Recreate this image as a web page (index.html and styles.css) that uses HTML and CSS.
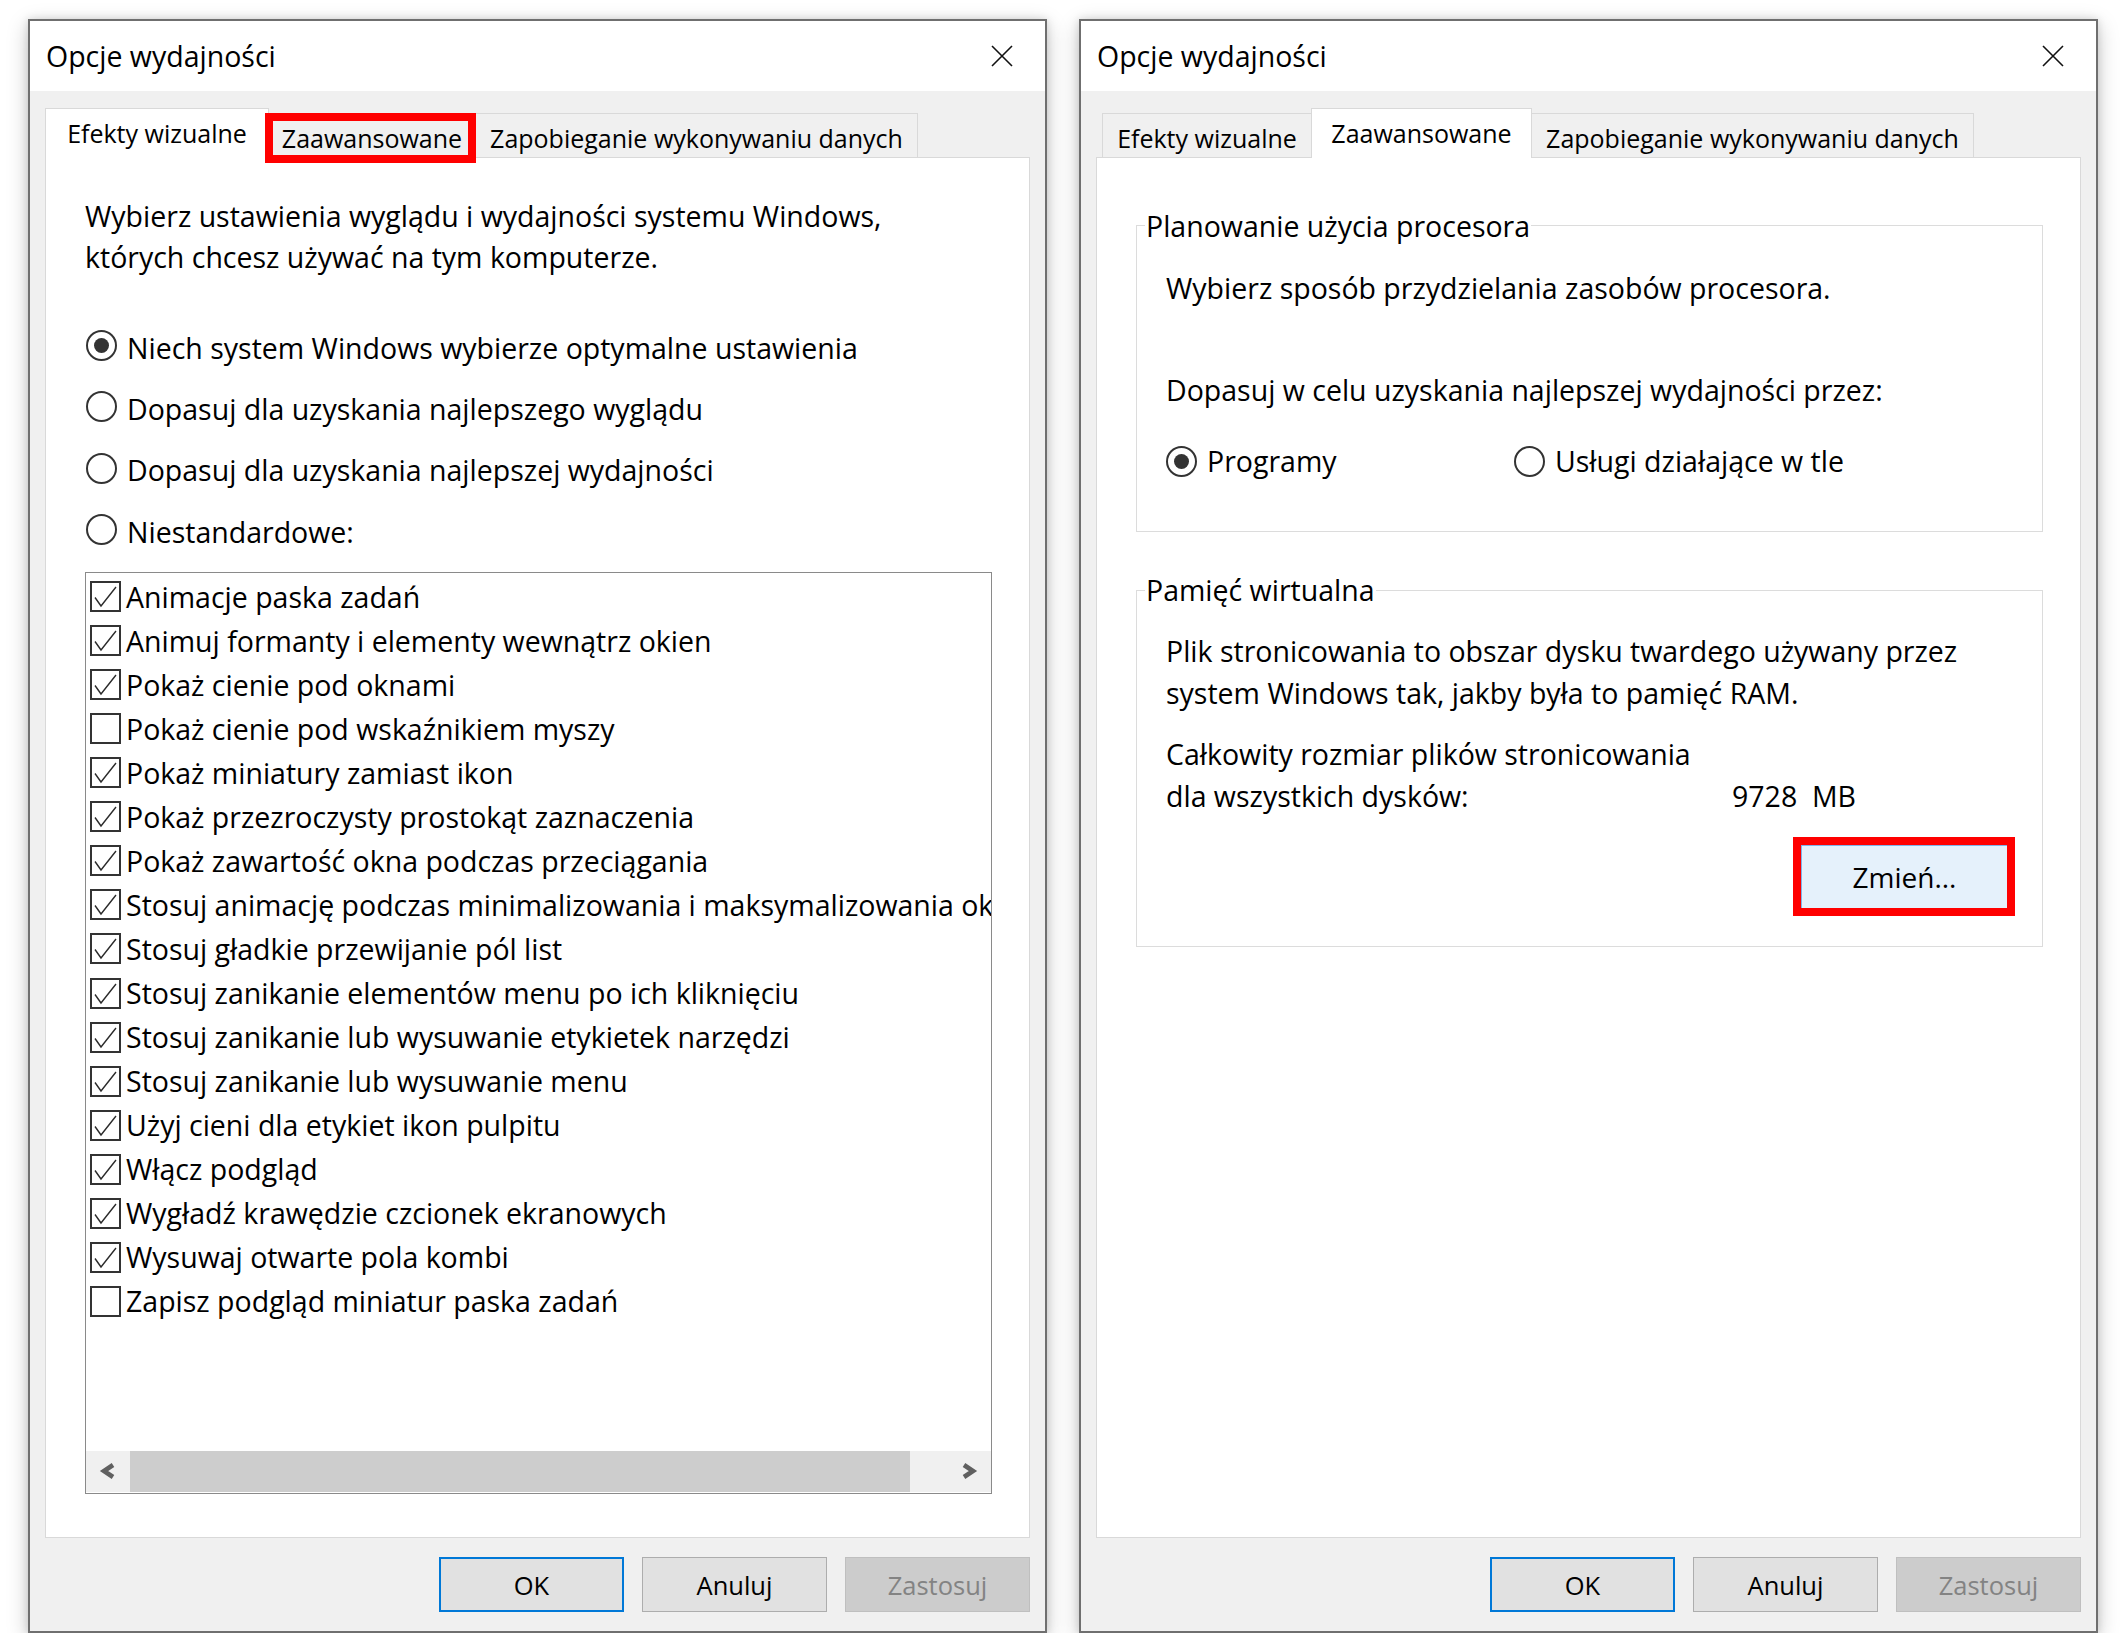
FILE: index.html
```html
<!DOCTYPE html>
<html lang="pl">
<head>
<meta charset="utf-8">
<title>Opcje wydajności</title>
<link rel="stylesheet" href="styles.css">
</head>
<body>
<div class="screen">

  <section class="dialog">
    <header class="titlebar">
      <span class="title">Opcje wydajności</span>
      <svg class="close" width="22" height="22" viewBox="0 0 22 22"><path d="M1 1L21 21M21 1L1 21" stroke="#111" stroke-width="1.6" fill="none"/></svg>
    </header>
    <div class="dialog-body">
      <div class="tabs">
        <div class="tab tab-efekty tab-active">Efekty wizualne</div>
        <div class="tab tab-zaaw">Zaawansowane<span class="mark mark-tab"></span></div>
        <div class="tab tab-dep">Zapobieganie wykonywaniu danych</div>
      </div>
      <div class="panel panel-visual">
        <p class="desc">Wybierz ustawienia wyglądu i wydajności systemu Windows,<br>których chcesz używać na tym komputerze.</p>
        <div class="radios">
          <div class="radio-row"><span class="radio checked"></span><span>Niech system Windows wybierze optymalne ustawienia</span></div>
          <div class="radio-row"><span class="radio"></span><span>Dopasuj dla uzyskania najlepszego wyglądu</span></div>
          <div class="radio-row"><span class="radio"></span><span>Dopasuj dla uzyskania najlepszej wydajności</span></div>
          <div class="radio-row"><span class="radio"></span><span>Niestandardowe:</span></div>
        </div>
        <div class="listbox">
          <div class="items">
            <div class="item"><span class="check on"><svg viewBox="0 0 27 27"><path d="M3 14.5L9 23L24 4"/></svg></span><span>Animacje paska zadań</span></div>
            <div class="item"><span class="check on"><svg viewBox="0 0 27 27"><path d="M3 14.5L9 23L24 4"/></svg></span><span>Animuj formanty i elementy wewnątrz okien</span></div>
            <div class="item"><span class="check on"><svg viewBox="0 0 27 27"><path d="M3 14.5L9 23L24 4"/></svg></span><span>Pokaż cienie pod oknami</span></div>
            <div class="item"><span class="check"></span><span>Pokaż cienie pod wskaźnikiem myszy</span></div>
            <div class="item"><span class="check on"><svg viewBox="0 0 27 27"><path d="M3 14.5L9 23L24 4"/></svg></span><span>Pokaż miniatury zamiast ikon</span></div>
            <div class="item"><span class="check on"><svg viewBox="0 0 27 27"><path d="M3 14.5L9 23L24 4"/></svg></span><span>Pokaż przezroczysty prostokąt zaznaczenia</span></div>
            <div class="item"><span class="check on"><svg viewBox="0 0 27 27"><path d="M3 14.5L9 23L24 4"/></svg></span><span>Pokaż zawartość okna podczas przeciągania</span></div>
            <div class="item"><span class="check on"><svg viewBox="0 0 27 27"><path d="M3 14.5L9 23L24 4"/></svg></span><span>Stosuj animację podczas minimalizowania i maksymalizowania okien</span></div>
            <div class="item"><span class="check on"><svg viewBox="0 0 27 27"><path d="M3 14.5L9 23L24 4"/></svg></span><span>Stosuj gładkie przewijanie pól list</span></div>
            <div class="item"><span class="check on"><svg viewBox="0 0 27 27"><path d="M3 14.5L9 23L24 4"/></svg></span><span>Stosuj zanikanie elementów menu po ich kliknięciu</span></div>
            <div class="item"><span class="check on"><svg viewBox="0 0 27 27"><path d="M3 14.5L9 23L24 4"/></svg></span><span>Stosuj zanikanie lub wysuwanie etykietek narzędzi</span></div>
            <div class="item"><span class="check on"><svg viewBox="0 0 27 27"><path d="M3 14.5L9 23L24 4"/></svg></span><span>Stosuj zanikanie lub wysuwanie menu</span></div>
            <div class="item"><span class="check on"><svg viewBox="0 0 27 27"><path d="M3 14.5L9 23L24 4"/></svg></span><span>Użyj cieni dla etykiet ikon pulpitu</span></div>
            <div class="item"><span class="check on"><svg viewBox="0 0 27 27"><path d="M3 14.5L9 23L24 4"/></svg></span><span>Włącz podgląd</span></div>
            <div class="item"><span class="check on"><svg viewBox="0 0 27 27"><path d="M3 14.5L9 23L24 4"/></svg></span><span>Wygładź krawędzie czcionek ekranowych</span></div>
            <div class="item"><span class="check on"><svg viewBox="0 0 27 27"><path d="M3 14.5L9 23L24 4"/></svg></span><span>Wysuwaj otwarte pola kombi</span></div>
            <div class="item"><span class="check"></span><span>Zapisz podgląd miniatur paska zadań</span></div>
          </div>
          <div class="scrollbar">
            <span class="sb-btn"><svg width="20" height="18" viewBox="0 0 20 18"><path d="M15 3L6 9L15 15"/></svg></span>
            <span class="sb-track"><span class="sb-thumb"></span></span>
            <span class="sb-btn"><svg width="20" height="18" viewBox="0 0 20 18"><path d="M5 3L14 9L5 15"/></svg></span>
          </div>
        </div>
      </div>
      <div class="buttons">
        <span class="btn btn-default">OK</span>
        <span class="btn">Anuluj</span>
        <span class="btn btn-disabled">Zastosuj</span>
      </div>
    </div>
  </section>

  <section class="dialog">
    <header class="titlebar">
      <span class="title">Opcje wydajności</span>
      <svg class="close" width="22" height="22" viewBox="0 0 22 22"><path d="M1 1L21 21M21 1L1 21" stroke="#111" stroke-width="1.6" fill="none"/></svg>
    </header>
    <div class="dialog-body">
      <div class="tabs tabs-inset">
        <div class="tab tab-efekty">Efekty wizualne</div>
        <div class="tab tab-zaaw tab-active">Zaawansowane</div>
        <div class="tab tab-dep">Zapobieganie wykonywaniu danych</div>
      </div>
      <div class="panel panel-advanced">
        <fieldset class="group group-cpu">
          <legend>Planowanie użycia procesora</legend>
          <div class="group-body">
            <p class="line">Wybierz sposób przydzielania zasobów procesora.</p>
            <p class="line line-gap">Dopasuj w celu uzyskania najlepszej wydajności przez:</p>
            <div class="options">
              <div class="option option-first"><span class="radio checked"></span><span>Programy</span></div>
              <div class="option"><span class="radio"></span><span>Usługi działające w tle</span></div>
            </div>
          </div>
        </fieldset>
        <fieldset class="group group-mem">
          <legend>Pamięć wirtualna</legend>
          <div class="group-body group-body-mem">
            <p class="para">Plik stronicowania to obszar dysku twardego używany przez<br>system Windows tak, jakby była to pamięć RAM.</p>
            <div class="total">
              <span class="total-label">Całkowity rozmiar plików stronicowania</span>
              <span></span>
              <span class="total-label">dla wszystkich dysków:</span>
              <span class="total-value">9728  MB</span>
            </div>
            <div class="change-row">
              <span class="btn-change">Zmień...<span class="mark mark-btn"></span></span>
            </div>
          </div>
        </fieldset>
      </div>
      <div class="buttons">
        <span class="btn btn-default">OK</span>
        <span class="btn">Anuluj</span>
        <span class="btn btn-disabled">Zastosuj</span>
      </div>
    </div>
  </section>

</div>
</body>
</html>
```

FILE: styles.css
```css
html, body {
  margin: 0;
  padding: 0;
  background: #ffffff;
}

body {
  font-family: "Open Sans", "Noto Sans", "DejaVu Sans", sans-serif;
  color: #000;
  font-size: 28.5px;
}

p { margin: 0; }

.screen {
  display: flex;
  gap: 32px;
  padding: 19px 0 0 28px;
}

.dialog {
  width: 1019px;
  height: 1614px;
  box-sizing: border-box;
  border: 2px solid #6f6f6f;
  background: #f0f0f0;
  display: flex;
  flex-direction: column;
  box-shadow: 0 6px 20px rgba(0, 0, 0, 0.22), 0 0 8px rgba(0, 0, 0, 0.12);
}

.titlebar {
  height: 70px;
  flex: 0 0 70px;
  box-sizing: border-box;
  background: #ffffff;
  display: flex;
  align-items: center;
  justify-content: space-between;
  padding: 0 32px 1px 16px;
}

.title {
  font-size: 28.5px;
}

.close {
  display: block;
  margin-top: 1px;
}

.dialog-body {
  flex: 1;
  display: flex;
  flex-direction: column;
  padding: 17px 15px 19px 15px;
  min-height: 0;
}

/* ---------- tabs ---------- */
.tabs {
  display: flex;
  align-items: flex-end;
  height: 49px;
  flex: 0 0 49px;
  position: relative;
  z-index: 1;
}

.tabs-inset {
  padding-left: 6px;
}

.tab {
  position: relative;
  box-sizing: border-box;
  height: 44px;
  border: 1px solid #d9d9d9;
  border-bottom: none;
  background: #f0f0f0;
  font-size: 25px;
  line-height: 34px;
  padding-top: 7px;
  text-align: center;
  white-space: nowrap;
}

.tab + .tab {
  margin-left: -1px;
}

.tab-active {
  height: 50px;
  margin-bottom: -1px;
  background: #ffffff;
  z-index: 1;
}

.tab-efekty { width: 210px; }
.tab-efekty.tab-active { width: 224px; }
.tab-zaaw { width: 208px; }
.tab-zaaw.tab-active { width: 221px; }
.tab-dep { width: 443px; }

.mark {
  position: absolute;
  border: 8px solid #ff0000;
  pointer-events: none;
}

.mark-tab {
  left: -4px;
  top: -1px;
  right: -1px;
  bottom: -6px;
  z-index: 3;
}

/* ---------- panel ---------- */
.panel {
  flex: 1;
  min-height: 0;
  background: #ffffff;
  border: 1px solid #d9d9d9;
  position: relative;
  z-index: 0;
}

.panel-visual {
  padding: 38px 0 0 39px;
}

.desc {
  line-height: 41px;
}

.radios {
  margin-top: 39px;
}

.radio-row {
  display: flex;
  align-items: center;
  height: 61.3px;
  white-space: nowrap;
}

.radio {
  flex: 0 0 auto;
  width: 31px;
  height: 31px;
  box-sizing: border-box;
  border: 2px solid #333333;
  border-radius: 50%;
  background: #ffffff;
  display: flex;
  align-items: center;
  justify-content: center;
  margin: 0 10px 4px 1px;
}

.radio.checked::after {
  content: "";
  width: 15px;
  height: 15px;
  border-radius: 50%;
  background: #333333;
}

/* ---------- list box ---------- */
.listbox {
  margin-top: 9.4px;
  width: 907px;
  height: 922px;
  box-sizing: border-box;
  border: 1px solid #8a8a8a;
  display: flex;
  flex-direction: column;
  background: #ffffff;
}

.items {
  flex: 1;
  min-height: 0;
  overflow: hidden;
  padding-top: 2px;
}

.item {
  display: flex;
  align-items: center;
  height: 44.05px;
  padding-left: 4px;
  white-space: nowrap;
}

.check {
  flex: 0 0 auto;
  width: 31px;
  height: 31px;
  box-sizing: border-box;
  border: 2px solid #333333;
  margin-right: 5px;
  background: #ffffff;
}

.check svg {
  display: block;
  width: 27px;
  height: 27px;
}

.check path {
  fill: none;
  stroke: #2b2b2b;
  stroke-width: 1.4;
}

.scrollbar {
  flex: 0 0 41px;
  height: 41px;
  margin-bottom: 1px;
  display: flex;
  background: #f0f0f0;
}

.sb-btn {
  flex: 0 0 44px;
  display: flex;
  align-items: center;
  justify-content: center;
}

.sb-btn svg path {
  fill: none;
  stroke: #606060;
  stroke-width: 4.6;
  stroke-linejoin: miter;
}

.sb-track {
  flex: 1;
  display: flex;
}

.sb-thumb {
  width: 780px;
  background: #cdcdcd;
}

/* ---------- buttons ---------- */
.buttons {
  flex: 0 0 55px;
  display: flex;
  justify-content: flex-end;
  gap: 18px;
  margin-top: 19px;
}

.btn {
  width: 185px;
  height: 55px;
  box-sizing: border-box;
  border: 1px solid #adadad;
  background: #e1e1e1;
  display: flex;
  align-items: center;
  justify-content: center;
  font-size: 25.5px;
}

.btn-default {
  border: 2px solid #0078d7;
}

.btn-disabled {
  background: #cccccc;
  border-color: #bfbfbf;
  color: #838383;
}

/* ---------- advanced panel ---------- */
.panel-advanced {
  padding: 48.6px 0 0 39px;
}

.group {
  margin: 0;
  padding: 0;
  width: 907px;
  box-sizing: border-box;
  border: 1px solid #dcdcdc;
  min-inline-size: 0;
}

.group legend {
  margin-left: 8px;
  padding: 0 1px;
  font-size: 28.5px;
}

.group-body {
  padding: 24px 0 50px 29px;
}

.line {
  white-space: nowrap;
}

.line-gap {
  margin-top: 64px;
}

.options {
  display: flex;
  align-items: center;
  margin-top: 33.5px;
  height: 38.8px;
}

.option {
  display: flex;
  align-items: center;
  white-space: nowrap;
}

.option .radio {
  margin: 0 10px 0 0;
}

.option-first {
  width: 348px;
}

.group-mem {
  margin-top: 39.6px;
}

.group-body-mem {
  padding: 20.5px 0 37.5px 29px;
}

.para {
  line-height: 42px;
  white-space: nowrap;
}

.total {
  margin-top: 19px;
  display: grid;
  grid-template-columns: 566px auto;
  line-height: 42px;
}

.total-label {
  white-space: nowrap;
}

.total-value {
  white-space: pre;
}

.change-row {
  display: flex;
  justify-content: flex-end;
  margin-top: 28px;
  padding-right: 34px;
}

.btn-change {
  position: relative;
  width: 207px;
  height: 64px;
  box-sizing: border-box;
  border: 1px solid #7eb4ea;
  background: #e5f1fb;
  display: flex;
  align-items: center;
  justify-content: center;
  font-size: 28px;
}

.mark-btn {
  left: -9px;
  top: -9px;
  right: -8px;
  bottom: -8px;
}
```
